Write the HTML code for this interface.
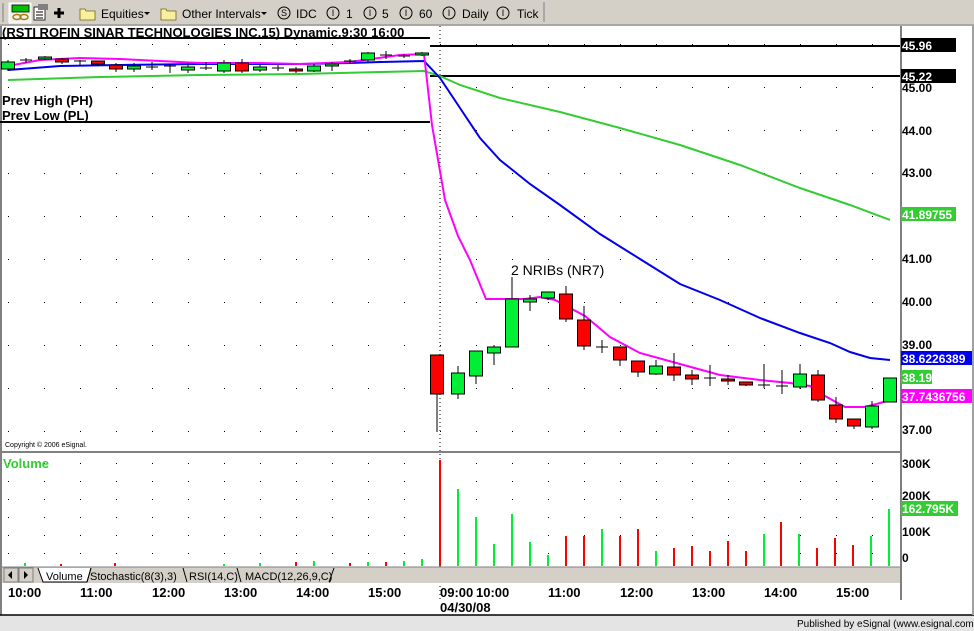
<!DOCTYPE html>
<html><head><meta charset="utf-8"><style>
html,body{margin:0;padding:0;width:974px;height:631px;overflow:hidden;background:#d4d0c8;font-family:"Liberation Sans",sans-serif}
</style></head><body>
<svg id="s" width="974" height="631" xmlns="http://www.w3.org/2000/svg" font-family="Liberation Sans, sans-serif">
<rect x="0" y="0" width="974" height="631" fill="#d4d0c8"/>
<!-- toolbar -->
<rect x="0" y="0" width="974" height="25" fill="#d4d0c8"/>
<line x1="3" y1="3" x2="3" y2="22" stroke="#808080"/>
<rect x="9" y="3" width="22" height="20" fill="#f0f0f0" stroke="#fff"/>
<rect x="12" y="5" width="17" height="7" fill="#00c000" stroke="#000" stroke-width="0.8"/>
<ellipse cx="17" cy="17" rx="4" ry="2.5" fill="none" stroke="#a08000" stroke-width="1.5"/>
<ellipse cx="24" cy="17" rx="4" ry="2.5" fill="none" stroke="#a08000" stroke-width="1.5"/>
<rect x="34" y="7" width="11" height="13" fill="#fff" stroke="#000" stroke-width="0.8"/>
<rect x="38" y="4" width="10" height="6" fill="#808080"/>
<line x1="36" y1="12" x2="43" y2="12" stroke="#000"/><line x1="36" y1="15" x2="43" y2="15" stroke="#000"/><line x1="36" y1="18" x2="43" y2="18" stroke="#000"/>
<path d="M59 8v10M54 13h10" stroke="#000" stroke-width="3"/>
<g fill="#f6f0a0" stroke="#806000" stroke-width="0.8"><path d="M80 9h5l1 2h9v9h-15z"/><path d="M161 9h5l1 2h9v9h-15z"/></g>
<g font-size="12" fill="#000">
<text x="101" y="18">Equities</text><path d="M144 12h6l-3 3z"/>
<text x="182" y="18">Other Intervals</text><path d="M261 12h6l-3 3z"/>
<g fill="none" stroke="#000"><circle cx="284" cy="13" r="6"/><circle cx="333" cy="13" r="6"/><circle cx="370" cy="13" r="6"/><circle cx="406" cy="13" r="6"/><circle cx="449" cy="13" r="6"/><circle cx="503" cy="13" r="6"/></g>
<g font-size="9" text-anchor="middle"><text x="284" y="16">S</text><text x="333" y="16">I</text><text x="370" y="16">I</text><text x="406" y="16">I</text><text x="449" y="16">I</text><text x="503" y="16">I</text></g>
<text x="296" y="18">IDC</text><text x="346" y="18">1</text><text x="382" y="18">5</text><text x="419" y="18">60</text><text x="462" y="18">Daily</text><text x="517" y="18">Tick</text>
</g>
<line x1="544" y1="2" x2="544" y2="22" stroke="#808080"/>
<line x1="0" y1="25" x2="974" y2="25" stroke="#808080"/>
<!-- chart bg -->
<rect x="0" y="26" width="974" height="589" fill="#fff"/>
<rect x="0" y="26" width="2" height="589" fill="#808080"/>
<g id="grid" fill="#000"></g>
<g stroke="#000" stroke-width="2">
<line x1="0" y1="38" x2="430" y2="38"/><line x1="0" y1="122" x2="430" y2="122"/>
<line x1="430" y1="46" x2="900" y2="46"/><line x1="430" y1="76" x2="900" y2="76"/>
</g>
<line x1="440" y1="26" x2="440" y2="600" stroke="#000" stroke-dasharray="1,3"/>
<text x="2" y="37" font-size="13" font-weight="bold">(RSTI   ROFIN SINAR TECHNOLOGIES INC,15) Dynamic,9:30 16:00</text>
<text x="2" y="105" font-size="13" font-weight="bold">Prev High (PH)</text>
<text x="2" y="120" font-size="13" font-weight="bold">Prev Low (PL)</text>
<text x="511" y="275" font-size="14">2 NRIBs (NR7)</text>
<text x="5" y="447" font-size="7">Copyright © 2006 eSignal.</text>
<g fill="none" stroke-width="2">
<polyline stroke="#33cc33" points="8,80 100,77 200,75 300,74 380,72 424,71 440,76 460,85 500,98 560,112 620,128 680,145 740,165 800,188 850,205 890,220"/>
<polyline stroke="#0000ee" points="8,70 60,66 120,65 200,64 300,64 350,63 380,62 424,61 440,78 460,108 480,138 500,160 530,184 560,205 600,234 640,259 680,284 720,300 760,318 800,333 830,343 850,352 870,358 890,360"/>
<polyline stroke="#ff00ff" points="8,66 40,60 80,58 120,59 160,61 200,63 260,63 300,64 350,62 400,55 424,54 432,125 445,200 458,236 470,260 486,299 525,299 540,297 555,300 585,316 610,337 640,353 680,364 720,375 760,380 790,383 810,386 825,396 845,407 865,407 880,403 890,400"/>
</g>
<g id="cd"></g>
<line x1="0" y1="452" x2="900" y2="452" stroke="#808080" stroke-width="2"/>
<line x1="901" y1="26" x2="901" y2="600" stroke="#000"/>
<g font-size="12" font-weight="bold">
<text x="902" y="92">45.00</text><text x="902" y="135">44.00</text><text x="902" y="177">43.00</text><text x="902" y="263">41.00</text><text x="902" y="306">40.00</text><text x="902" y="349">39.00</text><text x="902" y="434">37.00</text>
<rect x="901" y="38" width="55" height="14" fill="#000"/><text x="902" y="50" fill="#fff">45.96</text>
<rect x="901" y="69" width="55" height="14" fill="#000"/><text x="902" y="81" fill="#fff">45.22</text>
<rect x="901" y="207" width="55" height="14" fill="#33cc33"/><text x="902" y="219" fill="#fff">41.89755</text>
<rect x="901" y="351" width="73" height="14" fill="#0000ee"/><text x="902" y="363" fill="#fff">38.6226389</text>
<rect x="901" y="370" width="31" height="14" fill="#33cc33"/><text x="902" y="382" fill="#fff">38.19</text>
<rect x="901" y="389" width="73" height="14" fill="#ff00ff"/><text x="902" y="401" fill="#fff">37.7436756</text>
<text x="902" y="468">300K</text><text x="902" y="500">200K</text><text x="902" y="536">100K</text><text x="902" y="562">0</text>
<rect x="901" y="501" width="57" height="15" fill="#33cc33"/><text x="902" y="513" fill="#fff">162.795K</text>
</g>
<text x="3" y="468" font-size="13" font-weight="bold" fill="#33cc33">Volume</text>
<g id="vol"></g>
<rect x="2" y="567" width="898" height="16" fill="#d4d0c8"/>
<line x1="2" y1="567" x2="900" y2="567" stroke="#808080"/>
<rect x="4" y="568" width="14" height="14" fill="#d4d0c8" stroke="#808080"/><path d="M12 571v8l-4-4z"/>
<rect x="19" y="568" width="14" height="14" fill="#d4d0c8" stroke="#808080"/><path d="M24 571v8l4-4z"/>
<path d="M38 568l5 14h44l4-14" fill="#fff" stroke="#000"/>
<g font-size="11"><text x="46" y="580">Volume</text><text x="90" y="580">Stochastic(8(3),3)</text><text x="189" y="580">RSI(14,C)</text><text x="245" y="580">MACD(12,26,9,C)</text></g>
<g fill="none" stroke="#000"><path d="M87 582l4-14M183 568l4 14 M237 568l4 14M334 568l-5 14"/></g>
<g font-size="13" font-weight="bold">
<text x="8" y="597">10:00</text><text x="80" y="597">11:00</text><text x="152" y="597">12:00</text><text x="224" y="597">13:00</text><text x="296" y="597">14:00</text><text x="368" y="597">15:00</text>
<text x="440" y="597">09:00</text><text x="476" y="597">10:00</text><text x="548" y="597">11:00</text><text x="620" y="597">12:00</text><text x="692" y="597">13:00</text><text x="764" y="597">14:00</text><text x="836" y="597">15:00</text>
<text x="440" y="612">04/30/08</text>
</g>
<rect x="0" y="615" width="974" height="16" fill="#e4e4e4"/>
<line x1="0" y1="615" x2="974" y2="615" stroke="#000" stroke-width="1.5"/>
<text x="797" y="627" font-size="10">Published by eSignal (www.esignal.com)</text>
<rect x="972" y="26" width="2" height="589" fill="#a0a0a0"/>
</svg>
<script>
var NS="http://www.w3.org/2000/svg";
function el(p,t,a){var e=document.createElementNS(NS,t);for(var k in a)e.setAttribute(k,a[k]);document.getElementById(p).appendChild(e);}
for(var x=8;x<900;x+=36){for(var y=44;y<450;y+=43)el("grid","rect",{x:x,y:y,width:1,height:1});for(var y2=463;y2<565;y2+=18)el("grid","rect",{x:x,y:y2,width:1,height:1});}
var G="#00ee33",R="#ff0000";
var c=[
[8,62,69,60,71,G],[26,60,61,58,63,0],[45,57,59,56,60,G],[62,59,62,58,64,R],[80,61,62,60,66,0],[98,61,64,61,66,R],[116,65,69,63,72,R],[134,66,69,63,72,G],[152,67,68,62,70,0],[170,66,68,64,73,0],[188,67,70,63,73,G],[206,68,69,62,70,0],[224,63,71,60,73,G],[242,63,71,59,73,R],[260,67,70,65,72,G],[278,68,69,65,71,0],[296,69,71,67,73,R],[314,66,71,64,72,G],[332,64,66,62,71,G],[350,61,62,59,64,0],[368,53,60,52,62,G],[386,55,56,51,59,0],[404,56,57,54,58,0],[422,53,55,52,56,G],
[437,355,394,355,432,R],[458,373,394,366,399,G],[476,351,376,351,384,G],[494,347,353,345,365,G],[512,299,347,277,347,G],[530,299,302,295,311,G],[548,292,298,292,300,G],[566,294,319,286,322,R],[584,320,346,306,350,R],[602,347,347,340,353,0],[620,347,360,347,366,R],[638,361,372,361,377,R],[656,366,374,360,375,G],[674,367,375,353,381,R],[692,375,379,370,385,R],[710,378,378,365,386,0],[728,379,381,375,385,R],[746,382,385,382,386,R],[764,385,386,364,388,0],[782,386,386,370,394,0],[800,374,387,364,389,G],[818,375,400,370,402,R],[836,405,419,397,423,R],[854,419,426,419,429,R],[872,406,427,401,429,G],[890,378,402,378,402,G]];
c.forEach(function(d){
el("cd","line",{x1:d[0],x2:d[0],y1:d[3],y2:d[4],stroke:"#000"});
if(d[5])el("cd","rect",{x:d[0]-6.5,y:d[1],width:13,height:Math.max(2,d[2]-d[1]),fill:d[5],stroke:"#000"});
else el("cd","line",{x1:d[0]-6,x2:d[0]+6,y1:d[1],y2:d[1],stroke:"#000"});
});
var v=[[440,460,R],[458,489,G],[476,517,G],[494,544,G],[512,514,G],[530,542,G],[548,555,G],[566,536,R],[584,536,R],[602,529,G],[620,536,R],[638,529,R],[656,551,G],[674,548,R],[692,546,R],[710,551,R],[728,541,R],[746,551,R],[764,534,G],[781,522,R],[799,534,G],[817,548,R],[835,538,R],[853,545,R],[871,536,G],[889,509,G],
[25,563,G],[61,564,R],[115,563,R],[224,564,G],[260,563,G],[296,562,R],[314,561,G],[350,563,R],[368,562,G],[386,562,R],[404,561,G],[422,559,G]];
v.forEach(function(d){el("vol","rect",{x:d[0]-1,y:d[1],width:2,height:566-d[1],fill:d[2]});});
</script>
</body></html>
